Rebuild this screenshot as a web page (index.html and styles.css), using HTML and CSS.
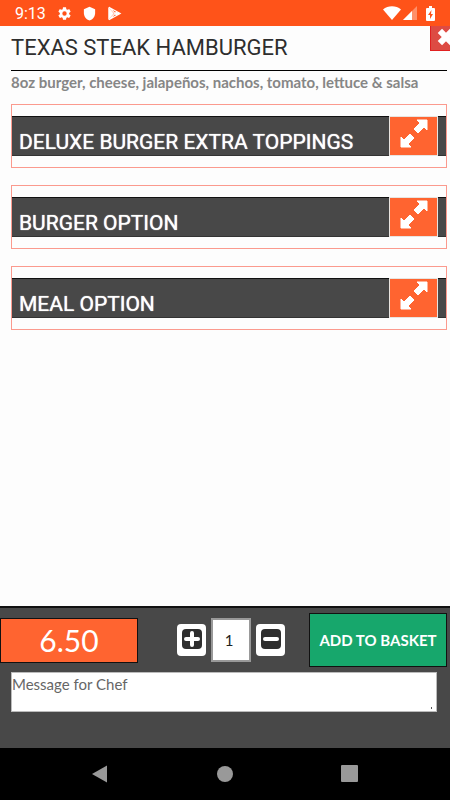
FILE: index.html
```
<!DOCTYPE html>
<html lang="en">
<head>
    <meta charset="UTF-8">
    <meta name="viewport" content="width=device-width, initial-scale=1.0">
    <title>Texas Steak Hamburger</title>
    <link rel="stylesheet" href="styles.css">
</head>
<body>
    <div class="status-bar">
        <span class="clock">9:13</span>
        <svg class="status-icon" viewBox="0 0 24 24"><path d="M19.4 13a7.500 7.500 0 0 0 0-2l2.200-1.700a.5.5 0 0 0 .1-.6l-2-3.500a.5.5 0 0 0-.6-.2l-2.500 1a7.300 7.300 0 0 0-1.700-1l-.4-2.600a.5.5 0 0 0-.5-.4h-4a.5.5 0 0 0-.5.4L9.100 5a7.300 7.300 0 0 0-1.700 1l-2.500-1a.5.5 0 0 0-.6.2l-2 3.500a.5.5 0 0 0 .1.600L4.600 11a7.500 7.500 0 0 0 0 2l-2.200 1.700a.5.5 0 0 0-.1.600l2 3.500c.1.200.4.300.6.200l2.500-1a7.300 7.300 0 0 0 1.700 1l.4 2.600c0 .2.200.4.500.4h4c.3 0 .5-.2.500-.4l.4-2.600a7.300 7.300 0 0 0 1.700-1l2.500 1c.2.100.5 0 .6-.2l2-3.500a.5.5 0 0 0-.1-.6zM12 15.500a3.500 3.500 0 1 1 0-7 3.500 3.500 0 0 1 0 7z"/></svg>
        <svg class="status-icon" viewBox="0 0 24 24"><path d="M12 1 3 5v6c0 5.500 3.800 10.700 9 12 5.200-1.300 9-6.500 9-12V5z"/></svg>
        <svg class="status-icon" viewBox="0 0 24 24"><path d="M2 2v20l9-10z"/><path d="m3 2 18 10L3 22M3 2l13 13M16 9 3 22" fill="none" stroke="#fff" stroke-width="2"/><path d="m15 9 6 3-6 3-3-3z"/></svg>
        <span class="status-right">
            <svg class="wifi" viewBox="0 0 18 14"><path d="M9 14 0 3.500C5-.8 13-.8 18 3.500z"/></svg>
            <svg class="signal" viewBox="0 0 14 14"><path d="M14 0v14H0z" opacity=".35"/><path d="M9 5v9H0z"/></svg>
            <svg class="battery" viewBox="0 0 9 15"><path fill-rule="evenodd" d="M3 0h3v2h2a1 1 0 0 1 1 1v11a1 1 0 0 1-1 1H1a1 1 0 0 1-1-1V3a1 1 0 0 1 1-1h2zM5.500 4 2 9h2v4l3-5H5z"/></svg>
        </span>
    </div>

    <main class="item">
        <button type="button" class="close-btn" aria-label="Close">
            <svg viewBox="0 0 18 18"><path d="m4 4 10 10M14 4 4 14"/></svg>
        </button>
        <h1>TEXAS STEAK HAMBURGER</h1>
        <p class="description">8oz burger, cheese, jalapeños, nachos, tomato, lettuce &amp; salsa</p>

        <section class="option">
            <div class="option-header">
                <h2>DELUXE BURGER EXTRA TOPPINGS</h2>
                <button type="button" class="expand-btn" aria-label="Expand toppings">
                    <svg viewBox="0 0 30 30"><path d="M18 2h10v10l-3-3-6 6-4-4 6-6zM12 29H2V19l3 3 6-6 4 4-6 6z"/></svg>
                </button>
            </div>
        </section>
        <section class="option">
            <div class="option-header">
                <h2>BURGER OPTION</h2>
                <button type="button" class="expand-btn" aria-label="Expand burger option">
                    <svg viewBox="0 0 30 30"><path d="M18 2h10v10l-3-3-6 6-4-4 6-6zM12 29H2V19l3 3 6-6 4 4-6 6z"/></svg>
                </button>
            </div>
        </section>
        <section class="option">
            <div class="option-header">
                <h2>MEAL OPTION</h2>
                <button type="button" class="expand-btn" aria-label="Expand meal option">
                    <svg viewBox="0 0 30 30"><path d="M18 2h10v10l-3-3-6 6-4-4 6-6zM12 29H2V19l3 3 6-6 4 4-6 6z"/></svg>
                </button>
            </div>
        </section>
    </main>

    <footer class="order">
        <div class="order-row">
            <div class="price">6.50</div>
            <div class="quantity">
                <button type="button" class="qty-btn" aria-label="Add one">
                    <svg viewBox="0 0 20 20"><rect width="20" height="20" rx="4"/><path d="M10 4v12M4 10h12"/></svg>
                </button>
                <input type="text" class="qty-input" value="1" aria-label="Quantity">
                <button type="button" class="qty-btn" aria-label="Remove one">
                    <svg viewBox="0 0 20 20"><rect width="20" height="20" rx="4"/><path d="M4 10h12"/></svg>
                </button>
            </div>
            <button type="button" class="basket-btn">ADD TO BASKET</button>
        </div>
        <textarea class="message" placeholder="Message for Chef" aria-label="Message for Chef"></textarea>
    </footer>

    <nav class="nav-bar">
        <button type="button" class="nav-btn" aria-label="Back"><svg viewBox="0 0 18 18"><path d="M0 9 15 0.500v17z"/></svg></button>
        <button type="button" class="nav-btn" aria-label="Home"><svg viewBox="0 0 18 18"><circle cx="9" cy="9" r="8"/></svg></button>
        <button type="button" class="nav-btn" aria-label="Recent apps"><svg viewBox="0 0 18 18"><rect x="1" y="0" width="17" height="17" rx="1"/></svg></button>
    </nav>
</body>
</html>
```
FILE: styles.css
```
* {
    box-sizing: border-box;
}
body {
    margin: 0;
    min-height: 100vh;
    display: flex;
    flex-direction: column;
    background: #fdfdfd;
    font-family: Lato, sans-serif;
}
button {
    padding: 0;
    border: none;
    cursor: pointer;
}
svg {
    display: block;
}
.status-bar {
    display: flex;
    align-items: center;
    gap: 10px;
    height: 26px;
    padding: 0 15px;
    background: #ff5319;
    color: #fff;
    fill: #fff;
    font-family: Roboto, sans-serif;
}
.clock {
    margin-right: 1px;
    padding-top: 2px;
    font-size: 16px;
    line-height: 26px;
}
.status-icon {
    width: 15px;
    height: 15px;
}
.status-right {
    display: flex;
    align-items: center;
    gap: 2px;
    margin-left: auto;
}
.wifi {
    width: 18px;
    height: 14px;
}
.signal {
    width: 14px;
    height: 14px;
}
.battery {
    width: 9px;
    height: 15px;
    margin-left: 7px;
}
.item {
    position: relative;
    flex: 1;
    padding: 0 3px 0 11px;
}
.close-btn {
    position: absolute;
    top: 0;
    right: 0;
    width: 20px;
    height: 25px;
    padding: 0 0 6px 4px;
    overflow: hidden;
    background: #dd4b43;
    border: 1px solid #e02020;
    border-top: none;
    border-right: none;
}
.close-btn svg {
    width: 22px;
    height: 22px;
    fill: none;
    stroke: #fff;
    stroke-width: 5px;
}
h1 {
    margin: 0;
    padding: 7px 0;
    border-bottom: 1px solid #000;
    color: #2e2e2e;
    font: 400 22px/30px Roboto, sans-serif;
}
.description {
    margin: 0 0 11px;
    color: #868686;
    font-size: 15px;
    line-height: 22px;
    font-weight: bold;
}
.option {
    margin-bottom: 17px;
    padding: 11px 0;
    border: 1px solid #fb9a8e;
}
.option-header {
    display: flex;
    justify-content: space-between;
    height: 40px;
    padding: 0 8px 0 7px;
    background: #484848;
    box-shadow: inset 0 1px #111, inset 0 -1px #333;
}
h2 {
    margin: 0;
    padding-top: 12px;
    color: #fff;
    font: 400 21px/28px Roboto, sans-serif;
    text-shadow: 0 0 1px #fff;
}
.expand-btn {
    width: 49px;
    height: 40px;
    padding: 1px 8px 7px 9px;
    background: #ff6430;
    border: 1px solid #e8e4e0;
}
.expand-btn svg {
    width: 30px;
    height: 30px;
    fill: #fff;
    stroke: #fff;
    stroke-width: 1px;
    stroke-linejoin: round;
}
.order {
    padding: 5px 0 36px;
    background: #484848;
    border-top: 2px solid #111;
}
.order-row {
    display: flex;
    align-items: center;
    padding-right: 3px;
}
.price {
    flex: 1;
    background: #ff6430;
    border: 1px solid #111;
    color: #fff;
    font-size: 30px;
    line-height: 43px;
    text-align: center;
}
.quantity {
    display: flex;
    align-items: center;
    gap: 5px;
    margin: 0 24px 0 39px;
}
.qty-btn {
    width: 29px;
    height: 32px;
    padding: 0 5px 2px;
    background: #fff;
    border-radius: 4px;
}
.qty-btn svg {
    width: 20px;
    height: 20px;
    fill: #2e2e2e;
    stroke: none;
}
.qty-btn path {
    fill: none;
    stroke: #fff;
    stroke-width: 4px;
    stroke-linecap: round;
}
.qty-input {
    width: 40px;
    height: 44px;
    padding: 0 4px 0 0;
    background: #fff;
    border: 2px solid #999;
    color: #222;
    font: 15px Lato, sans-serif;
    text-align: center;
}
.basket-btn {
    flex: 1;
    height: 54px;
    background: #17a76c;
    border: 1px solid #111;
    color: #fff;
    font: bold 15px Lato, sans-serif;
    white-space: nowrap;
}
.message {
    display: block;
    width: calc(100% - 24px);
    height: 40px;
    margin: 5px 13px 0 11px;
    padding: 1px 0;
    background: #fff;
    border: 1px solid #bbb;
    font: 15px/20px Lato, sans-serif;
}
.message::placeholder {
    color: #666;
}
.message::-webkit-resizer {
    background: linear-gradient(#555, #555) 10px 11px / 1px 2px no-repeat;
}
.nav-bar {
    display: flex;
    align-items: center;
    justify-content: center;
    gap: 106px;
    height: 52px;
    background: #000;
}
.nav-btn {
    background: none;
}
.nav-btn svg {
    width: 18px;
    height: 18px;
    fill: #999;
}
```
